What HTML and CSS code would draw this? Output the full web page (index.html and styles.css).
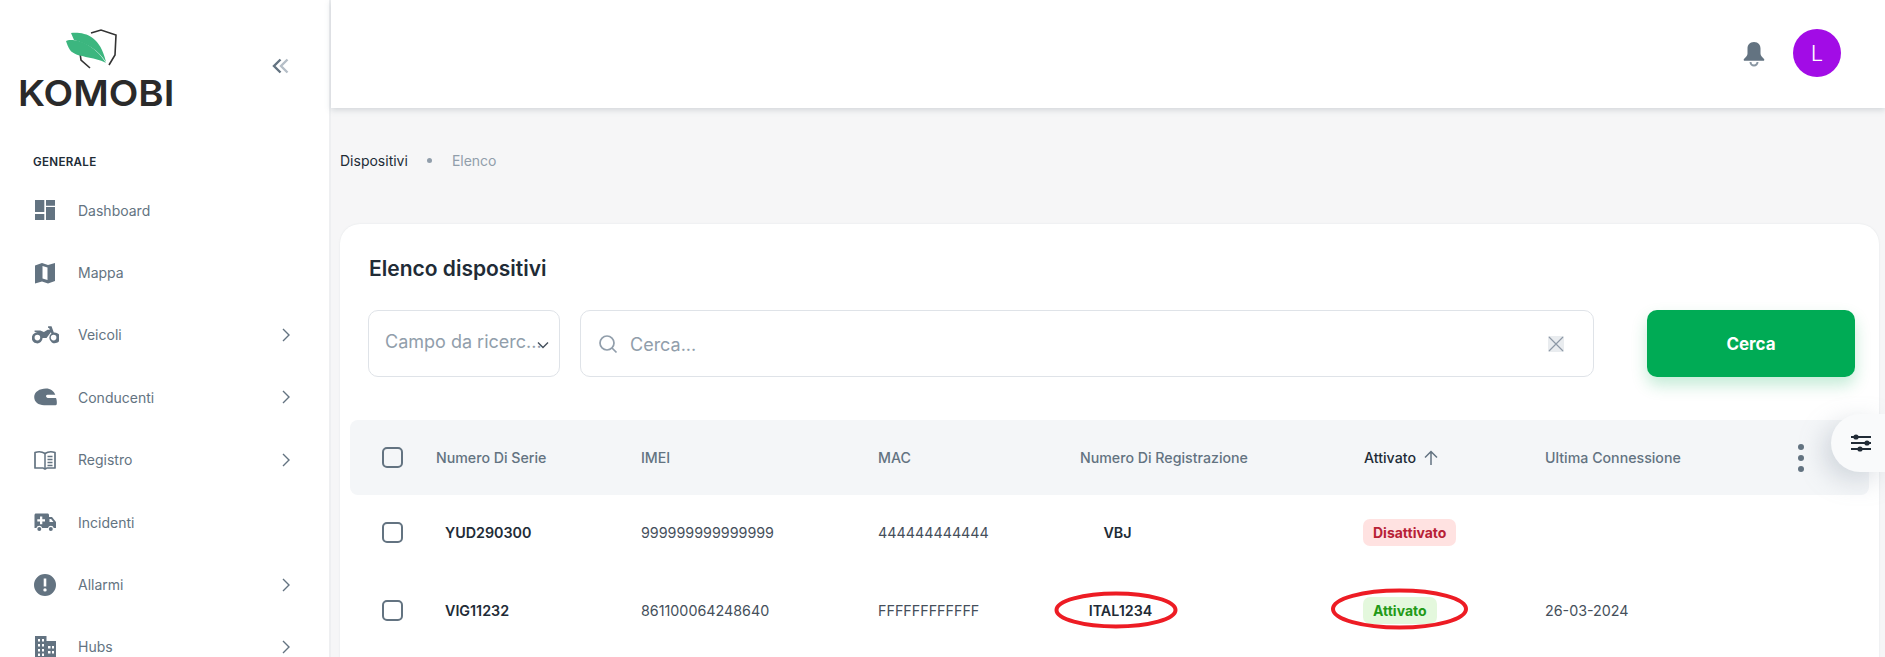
FILE: index.html
```html
<!DOCTYPE html>
<html lang="it">
<head>
    <meta charset="UTF-8">
    <title>Elenco dispositivi</title>
    <link rel="stylesheet" href="styles.css">
</head>
<body>
<div class="app">
    <aside class="sidebar">
        <div class="brand">
            <div class="logo">
                <svg class="logo-mark" viewBox="0 0 56 42" width="56" height="42">
                    <path d="M27 6 L37 3 L52 8 L51 28 L45 38" fill="none" stroke="#333" stroke-width="1.6"/>
                    <path d="M16 26 L17 33 L26 41" fill="none" stroke="#333" stroke-width="1.6"/>
                    <path d="M7 6 C20 5 36 8 42 35 C34 23 24 17 10 13Z" fill="#3cb67f"/>
                    <path d="M2 14 C6 11 28 13 42 36 C30 29 12 31 6 23 C4 20 3 17 2 14Z" fill="#3cb67f"/>
                </svg>
                <div class="logo-text">KOMOBI</div>
            </div>
            <svg class="collapse" viewBox="0 0 18 16" width="18" height="16">
                <path d="M8.5 1.5 L2 8 L8.5 14.500" fill="none" stroke="#637381" stroke-width="2.400"/>
                <path d="M15.500 1.500 L9 8 L15.500 14.500" fill="none" stroke="#b5bec7" stroke-width="2.400"/>
            </svg>
        </div>
        <div class="nav-title">GENERALE</div>
        <ul class="nav">
            <li>
                <svg class="nav-icon" viewBox="0 0 24 24"><path d="M2 2h9.300v12H2zM13 2h9v5.700h-9zM2 16h9.300v6H2zM13 9h9v13h-9z"/></svg>
                <span>Dashboard</span>
            </li>
            <li>
                <svg class="nav-icon" viewBox="0 0 24 24"><path fill-rule="evenodd" d="M2 4.500 9 2l6 2 7-2v18l-7 2.500-6-2-7 2zM9.500 5v12.600l5 1.500V6.500z"/></svg>
                <span>Mappa</span>
            </li>
            <li>
                <svg class="nav-icon" viewBox="0 0 26 17"><path fill-rule="evenodd" d="M15.500 0h3.300l2.200 6.100a5.200 5.200 0 1 1-2.300 1L18.200 5.800 14 11.500h-3.800A5.200 5.200 0 1 1 6.500 6.400L2.500 5.500V4.200H8l3.500 1.300L15 3.400h2.200l-.8-1.700h-.9zM5.200 8.300a2.700 2.700 0 1 0 0 5.400 2.700 2.700 0 0 0 0-5.400zM20.800 8.300a2.700 2.700 0 1 0 0 5.400 2.700 2.700 0 0 0 0-5.400z"/></svg>
                <span>Veicoli</span>
            </li>
            <li>
                <svg class="nav-icon" viewBox="0 0 24 24"><path fill-rule="evenodd" d="M13 3.500C17.500 3.500 21 6 22.300 9.800L14.500 9.800c-1.500 0-2 1.800-.7 2.700l.8.500H23c.7 1.800 1 3.500 .8 5.800-.1 1-.4 1.400-1.200 1.400H11C5.500 20.200 1.200 17 1.200 12 1.200 7 6.500 3.500 13 3.500z"/></svg>
                <span>Conducenti</span>
            </li>
            <li>
                <svg class="nav-icon" viewBox="0 0 24 24"><path d="M2 4.500c3-1 7-1 10 1 3-2 7-2 10-1v15.500h-8c-.8 0-1.300 .8-2 .8s-1.200-.8-2-.8H2z" fill="none" stroke="#637381" stroke-width="1.700" stroke-linejoin="round"/><path d="M12 5.500v14.500M14.500 8.500h5M14.500 11.500h5M14.500 14.500h5M14.500 17.500h5" fill="none" stroke="#637381" stroke-width="1.500"/></svg>
                <span>Registro</span>
            </li>
            <li>
                <svg class="nav-icon" viewBox="0 0 24 24"><path fill-rule="evenodd" d="M3 3.500h11.500c.8 0 1.500 .7 1.500 1.500v2h3l4 5v6h-2.200a3 3 0 0 0-5.800 0H9.200a3 3 0 0 0-5.800 0H1.500V5c0-.8 .7-1.500 1.500-1.500zM7 6.500v2.700H4.300v2.300H7v2.700h2.300v-2.700H12V9.200H9.300V6.500zM16.500 9v3h4l-2.400-3zM6.300 17a2 2 0 1 1 0 4 2 2 0 0 1 0-4zM17.800 17a2 2 0 1 1 0 4 2 2 0 0 1 0-4z"/></svg>
                <span>Incidenti</span>
            </li>
            <li>
                <svg class="nav-icon" viewBox="0 0 24 24"><path fill-rule="evenodd" d="M12 1a11 11 0 1 1 0 22 11 11 0 0 1 0-22zM10.700 5.500v8h2.600v-8zM12 15.200a1.700 1.700 0 1 0 0 3.400 1.700 1.700 0 0 0 0-3.400z"/></svg>
                <span>Allarmi</span>
            </li>
            <li>
                <svg class="nav-icon" viewBox="0 0 24 24"><path fill-rule="evenodd" d="M2 1h11.500v5H23v17H2zM5 4v2.500h2V4zM9 4v2.500h2V4zM5 9v2.500h2V9zM9 9v2.500h2V9zM5 14v2.500h2V14zM9 14v2.500h2V14zM5 18.500V21h2v-2.500zM9 18.500V21h2v-2.500zM15 11v2.500h2.500V11zM19 11v2.500h2V11zM15 16v2.500h2.500V16zM19 16v2.500h2V16z"/></svg>
                <span>Hubs</span>
            </li>
        </ul>
    </aside>

    <main class="main">
        <header class="topbar">
            <svg class="bell" viewBox="0 0 24 26" width="24" height="26">
                <path d="M12 1c-4.500 0-6.500 3-6.500 6.500v5c0 2-1.500 3.500-3.500 5.500-.7 .8-.2 1.800 .8 1.800h18.400c1 0 1.500-1 .8-1.800-2-2-3.500-3.500-3.500-5.500v-5C18.500 4 16.500 1 12 1z" fill="#637381"/>
                <path d="M8.500 21a3.500 3.500 0 0 0 7 0" fill="none" stroke="#8a97a3" stroke-width="2"/>
            </svg>
            <div class="avatar">L</div>
        </header>

        <div class="content">
            <div class="crumbs">
                <span>Dispositivi</span>
                <i class="crumb-dot"></i>
                <span class="crumb-last">Elenco</span>
            </div>

            <section class="card">
                <h2 class="card-title">Elenco dispositivi</h2>
                <div class="filters">
                    <div class="select">
                        <span>Campo da ricerc...</span>
                        <svg class="select-arrow" viewBox="0 0 12 8" width="12" height="8"><path d="M1 1.500 6 6.500 11 1.500" fill="none" stroke="#454f5b" stroke-width="1.400"/></svg>
                    </div>
                    <div class="search">
                        <svg viewBox="0 0 20 20" width="20" height="20"><circle cx="9" cy="9" r="7" fill="none" stroke="#919eab" stroke-width="1.700"/><path d="M14 14 18.500 18.500" stroke="#919eab" stroke-width="1.700"/></svg>
                        <span class="search-text">Cerca...</span>
                        <div class="search-clear">
                            <svg viewBox="0 0 16 16" width="16" height="16"><path d="M1 1 15 15M15 1 1 15" stroke="#8d99a6" stroke-width="1.200"/></svg>
                        </div>
                    </div>
                    <button class="btn-search">Cerca</button>
                </div>

                <div class="grid-row grid-head">
                    <div class="cell-check"><i class="checkbox"></i></div>
                    <div>Numero Di Serie</div>
                    <div>IMEI</div>
                    <div>MAC</div>
                    <div>Numero Di Registrazione</div>
                    <div class="sorted">Attivato
                        <svg viewBox="0 0 18 18" width="18" height="18"><path d="M9 16V2.500M3 8.500l6-6 6 6" fill="none" stroke="#637381" stroke-width="1.500"/></svg>
                    </div>
                    <div>Ultima Connessione</div>
                    <div class="dots"><i></i><i></i><i></i></div>
                </div>

                <div class="grid-row">
                    <div class="cell-check"><i class="checkbox"></i></div>
                    <div class="serial">YUD290300</div>
                    <div>999999999999999</div>
                    <div>444444444444</div>
                    <div class="reg"><b class="reg-short">VBJ</b></div>
                    <div><span class="badge badge-off">Disattivato</span></div>
                    <div></div>
                    <div></div>
                </div>

                <div class="grid-row">
                    <div class="cell-check"><i class="checkbox"></i></div>
                    <div class="serial">VIG11232</div>
                    <div>861100064248640</div>
                    <div>FFFFFFFFFFFF</div>
                    <div class="reg"><b>ITAL1234</b></div>
                    <div><span class="badge badge-on">Attivato</span></div>
                    <div>26-03-2024</div>
                    <div></div>
                </div>
            </section>
        </div>

        <div class="settings-tab">
            <svg viewBox="0 0 22 20" width="22" height="20">
                <path d="M1 4H21M1 10H21M1 16H21" stroke="#212b36" stroke-width="1.800"/>
                <circle cx="6" cy="4" r="2.600" fill="#212b36"/>
                <circle cx="17" cy="10" r="2.600" fill="#212b36"/>
                <circle cx="10" cy="16" r="2.600" fill="#212b36"/>
            </svg>
        </div>
    </main>
</div>

<!-- red marks drawn over the screenshot -->
<svg class="marks" width="1885" height="657">
    <ellipse cx="1116" cy="610" rx="59.500" ry="16.500" fill="none" stroke="#ed1c24" stroke-width="4"/>
    <ellipse cx="1399.500" cy="609" rx="66.500" ry="18.500" fill="none" stroke="#ed1c24" stroke-width="4"/>
</svg>
</body>
</html>
```

FILE: styles.css
```css
* {
    margin: 0;
    padding: 0;
    box-sizing: border-box;
}

html, body {
    height: 100%;
    overflow: hidden;
}

body {
    position: relative;
    font-family: Inter, "Noto Sans", sans-serif;
    font-size: 14px;
    color: #212b36;
    background: #f6f6f7;
}

ul, li {
    list-style: none;
}

.app {
    display: flex;
    height: 657px;
}

/* sidebar */
.sidebar {
    flex: none;
    width: 331px;
    background: #fff;
    border-right: 2px solid #eeeff1;
    overflow: hidden;
}

.brand {
    display: flex;
    align-items: flex-start;
    height: 153px;
    padding: 27px 0 0 18px;
}

.logo {
    width: 155px;
    display: flex;
    flex-direction: column;
}

.logo-mark {
    margin-left: 46px;
    display: block;
}

.logo-text {
    margin-top: 9px;
    font-size: 36px;
    line-height: 30px;
    font-weight: 600;
    color: #2a2a2a;
    white-space: nowrap;
    transform: scaleX(1.07);
    transform-origin: left center;
}

.collapse {
    margin: 31px 0 0 99px;
}

.nav-title {
    padding-left: 33px;
    font-size: 11.600px;
    line-height: 18px;
    font-weight: 600;
    letter-spacing: .3px;
    color: #212b36;
}

.nav {
    margin-top: 8px;
}

.nav li {
    display: flex;
    align-items: center;
    height: 62.4px;
    padding-left: 33px;
    color: #637381;
}

.nav li:nth-child(n+3):not(:nth-child(6)) {
    background: no-repeat 282px center / 8px 14px
        url("data:image/svg+xml,%3Csvg xmlns='http://www.w3.org/2000/svg' viewBox='0 0 8 14'%3E%3Cpath d='M1 1l6 6-6 6' fill='none' stroke='%23637381' stroke-width='1.400'/%3E%3C/svg%3E");
}

.nav-icon {
    flex: none;
    width: 24px;
    height: 24px;
    margin-right: 21px;
    fill: #637381;
}

/* motorbike icon is wider than the others */
.nav li:nth-child(3) .nav-icon {
    width: 27px;
    height: 18px;
    margin-left: -1px;
    margin-right: 19px;
}

/* top */
.main {
    position: relative;
    flex: 1;
    min-width: 0;
}

.topbar {
    display: flex;
    align-items: center;
    justify-content: flex-end;
    gap: 27px;
    height: 108px;
    padding: 0 44px 2px 0;
    background: #fff;
    box-shadow: 0 2px 6px rgba(99, 115, 129, .25);
}

.bell {
    margin-top: 2px;
}

.avatar {
    display: flex;
    align-items: center;
    justify-content: center;
    width: 48px;
    height: 48px;
    border-radius: 50%;
    background: #a20ce6;
    color: #fff;
    font-size: 22px;
    font-weight: 300;
}

.content {
    padding: 0 6px 0 9px;
}

.crumbs {
    display: flex;
    align-items: center;
    height: 116px;
    font-size: 14px;
    padding-bottom: 12px;
    color: #212b36;
}

.crumb-dot {
    width: 5px;
    height: 5px;
    margin: 0 20px 0 19px;
    border-radius: 50%;
    background: #919eab;
}

.crumb-last {
    color: #919eab;
}

/* card */
.card {
    height: 600px;
    padding: 0 10px;
    background: #fff;
    border-radius: 20px;
    box-shadow: 0 0 2px rgba(145, 158, 171, .2);
}

.card-title {
    padding: 32px 0 0 19px;
    font-size: 21px;
    line-height: 26px;
    font-weight: 600;
}

.filters {
    display: flex;
    margin-top: 28px;
    padding-left: 18px;
    height: 67px;
}

.select {
    position: relative;
    display: flex;
    align-items: center;
    width: 192px;
    padding: 0 0 4px 16px;
    margin-right: 20px;
    border: 1px solid #dfe3e8;
    border-radius: 10px;
    font-size: 18px;
    color: #919eab;
    white-space: nowrap;
    overflow: hidden;
}

.select-arrow {
    position: absolute;
    right: 10px;
    top: 30px;
}

.search {
    display: flex;
    align-items: center;
    width: 1014px;
    padding: 0 29px 0 17px;
    border: 1px solid #dfe3e8;
    border-radius: 10px;
    font-size: 18px;
    color: #919eab;
}

.search-text {
    flex: 1;
    margin: 2px 0 0 12px;
}

.search-clear {
    display: flex;
    width: 16px;
    height: 16px;
    background: #e9ecef;
}

.btn-search {
    width: 208px;
    margin-left: 53px;
    border: 0;
    border-radius: 10px;
    background: #00ab55;
    color: #fff;
    font: 700 17px Inter, "Noto Sans", sans-serif;
    box-shadow: 0 8px 16px rgba(0, 171, 85, .24);
}

/* table */
.grid-row {
    display: grid;
    grid-template-columns: 86px 205px 237px 202px 285px 180px 236px 88px;
    align-items: center;
    height: 78px;
    padding-bottom: 3px;
    font-size: 14.300px;
    color: #454f5b;
}

.grid-head {
    height: 75px;
    margin-top: 43px;
    padding-bottom: 0;
    border-radius: 8px;
    background: #f4f6f8;
    color: #637381;
    font-weight: 500;
    font-size: 14.200px;
}

.cell-check {
    padding-left: 32px;
}

.checkbox {
    display: block;
    width: 21px;
    height: 21px;
    border: 2px solid #637381;
    border-radius: 5px;
}

.serial {
    padding-left: 9px;
    font-weight: 600;
    color: #212b36;
}

.reg {
    width: 81px;
    text-align: center;
}

.reg b {
    font-weight: 600;
    color: #212b36;
}

.reg-short {
    margin-right: 6px;
}

.sorted {
    display: flex;
    align-items: center;
    gap: 6px;
    margin-left: -1px;
    color: #212b36;
}

.dots {
    display: flex;
    flex-direction: column;
    gap: 5px;
    padding-left: 17px;
}

.dots i {
    width: 6px;
    height: 6px;
    border-radius: 50%;
    background: #637381;
}

.badge {
    display: inline-block;
    height: 27px;
    line-height: 27px;
    padding: 0 10px;
    border-radius: 7px;
    font-size: 14px;
    font-weight: 700;
}

.badge-off {
    margin-left: -2px;
    background: #ffe2e1;
    color: #b72136;
}

.badge-on {
    margin-left: -2px;
    background: #e4f8dd;
    color: #229a16;
}

.settings-tab {
    position: absolute;
    top: 414px;
    right: 0;
    display: flex;
    align-items: center;
    padding-left: 19px;
    width: 54px;
    height: 58px;
    border-radius: 29px 0 0 29px;
    background: #f9fafb;
    box-shadow: -8px 8px 24px rgba(145, 158, 171, .35);
}

.marks {
    position: absolute;
    top: 0;
    left: 0;
    pointer-events: none;
}
```
